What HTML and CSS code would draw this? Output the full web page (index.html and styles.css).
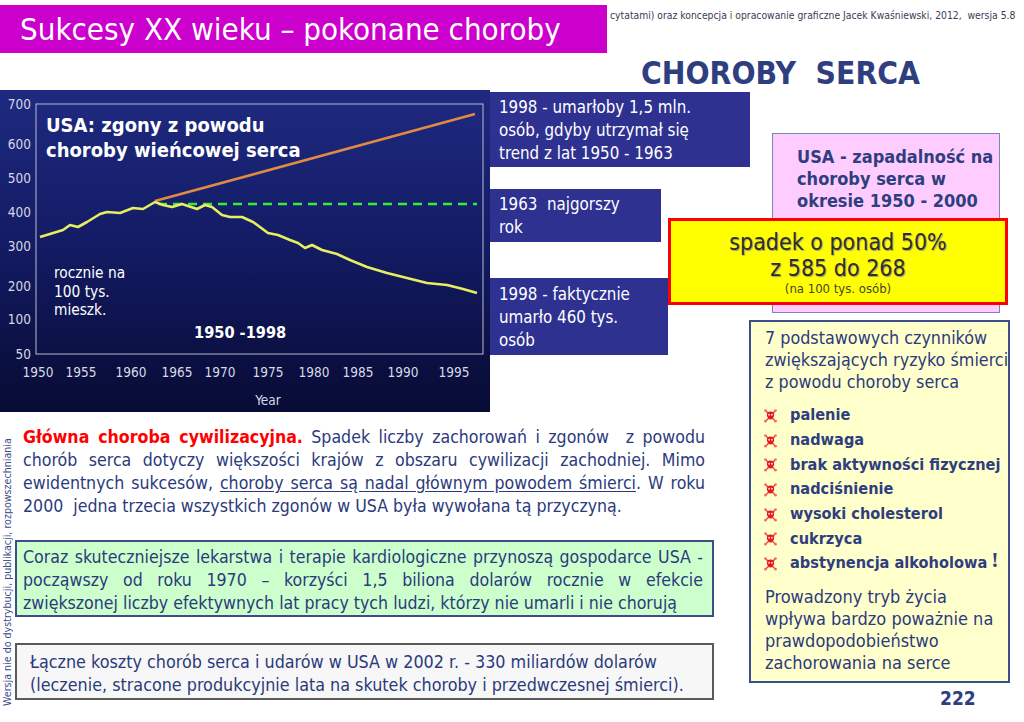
FILE: index.html
```html
<!DOCTYPE html>
<html lang="pl">
<head>
<meta charset="utf-8">
<title>Sukcesy XX wieku – pokonane choroby</title>
<link rel="stylesheet" href="styles.css">
</head>
<body>
<div class="slide">
  <header class="top">
    <div class="title-bar">Sukcesy XX wieku – pokonane choroby</div>
    <div class="credit">cytatami) oraz koncepcja i opracowanie graficzne Jacek Kwaśniewski, 2012,&nbsp; wersja 5.8</div>
  </header>
  <h1 class="heading">CHOROBY&nbsp; SERCA</h1>

  <div class="main">
    <div class="left">
      <div class="top-row">
        <div class="chart">
          <svg viewBox="0 0 490 322" width="490" height="322">
            <defs>
              <linearGradient id="bg" x1="0" y1="0" x2="0" y2="1">
                <stop offset="0" stop-color="#1f2a80"/>
                <stop offset="0.45" stop-color="#141c66"/>
                <stop offset="1" stop-color="#070b34"/>
              </linearGradient>
            </defs>
            <rect x="0" y="0" width="490" height="322" fill="url(#bg)"/>
            <rect x="36" y="14" width="447" height="250" fill="none" stroke="#b9bccf" stroke-width="1"/>
            <g class="ax" text-anchor="end">
              <text x="31" y="19">700</text>
              <text x="31" y="59">600</text>
              <text x="31" y="93">500</text>
              <text x="31" y="127">400</text>
              <text x="31" y="161">300</text>
              <text x="31" y="201">200</text>
              <text x="31" y="234">100</text>
              <text x="31" y="269">50</text>
            </g>
            <g class="ax" text-anchor="middle">
              <text x="38" y="287">1950</text>
              <text x="81" y="287">1955</text>
              <text x="131" y="287">1960</text>
              <text x="177" y="287">1965</text>
              <text x="220" y="287">1970</text>
              <text x="268" y="287">1975</text>
              <text x="314" y="287">1980</text>
              <text x="358" y="287">1985</text>
              <text x="403" y="287">1990</text>
              <text x="454" y="287">1995</text>
              <text x="268" y="315">Year</text>
            </g>
            <line x1="155" y1="111" x2="475" y2="24" stroke="#e08a44" stroke-width="2.6"/>
            <line x1="158" y1="114" x2="477" y2="114" stroke="#33ee33" stroke-width="2.4" stroke-dasharray="9 6"/>
            <polyline fill="none" stroke="#e6ee62" stroke-width="2.6" stroke-linejoin="round"
              points="40,147 63,140 70,135 78,137 87,132 100,124 107,122 120,123 133,118 143,119 155,112 163,115 172,117 182,114 197,119 205,115 212,117 222,125 230,127 242,127 253,132 268,143 278,145 290,150 298,153 305,158 312,155 322,160 337,164 350,170 367,177 387,183 407,188 427,193 447,195 463,199 477,203"/>
            <text class="ctitle" x="46" y="42">USA: zgony z powodu</text>
            <text class="ctitle" x="46" y="67">choroby wieńcowej serca</text>
            <text class="cnote" x="54" y="188">rocznie na</text>
            <text class="cnote" x="54" y="207">100 tys.</text>
            <text class="cnote" x="54" y="225">mieszk.</text>
            <text class="cyears" x="194" y="248">1950 -1998</text>
          </svg>
        </div>
        <div class="notes">
          <div class="note n1">1998 - umarłoby 1,5 mln.<br>osób, gdyby utrzymał się<br>trend z lat 1950 - 1963</div>
          <div class="note n2">1963&nbsp; najgorszy<br>rok</div>
          <div class="note n3">1998 - faktycznie<br>umarło 460 tys.<br>osób</div>
        </div>
      </div>

      <div class="para">
        <div class="jl"><span class="red">Główna choroba cywilizacyjna.</span> Spadek liczby zachorowań i zgonów&nbsp; z powodu</div>
        <div class="jl">chorób serca dotyczy większości krajów z obszaru cywilizacji zachodniej. Mimo</div>
        <div class="jl">ewidentnych sukcesów, <span class="ul">choroby serca są nadal głównym powodem śmierci</span>. W roku</div>
        <div class="ll">2000&nbsp; jedna trzecia wszystkich zgonów w USA była wywołana tą przyczyną.</div>
      </div>

      <div class="green">
        <div class="jl">Coraz skuteczniejsze lekarstwa i terapie kardiologiczne przynoszą gospodarce USA -</div>
        <div class="jl">począwszy od roku 1970 – korzyści 1,5 biliona dolarów rocznie w efekcie</div>
        <div class="ll">zwiększonej liczby efektywnych lat pracy tych ludzi, którzy nie umarli i nie chorują</div>
      </div>

      <div class="grey">
        Łączne koszty chorób serca i udarów w USA w 2002 r. - 330 miliardów dolarów<br>(leczenie, stracone produkcyjnie lata na skutek choroby i przedwczesnej śmierci).
      </div>
    </div>

    <div class="right">
      <div class="pink">
        USA - zapadalność na<br>choroby serca w<br>okresie 1950 - 2000
        <div class="drop">
          <div class="big">spadek o ponad 50%</div>
          <div class="big">z 585 do 268</div>
          <div class="small">(na 100 tys. osób)</div>
        </div>
      </div>

      <div class="factors">
        <div class="intro">7 podstawowych czynników<br>zwiększających ryzyko śmierci<br>z powodu choroby serca</div>
        <ul class="risk">
          <li><svg class="skull" viewBox="0 0 16 16"><g stroke="#f04040" stroke-width="1.5" stroke-linecap="round"><line x1="3" y1="3" x2="13" y2="14"/><line x1="13" y1="3" x2="3" y2="14"/></g><g fill="#f46a6a"><circle cx="2.6" cy="2.6" r="1.4"/><circle cx="13.4" cy="2.6" r="1.4"/><circle cx="2.6" cy="14" r="1.4"/><circle cx="13.4" cy="14" r="1.4"/></g><ellipse cx="8" cy="7.4" rx="3.9" ry="3.6" fill="#e81818"/><rect x="6" y="9.5" width="4" height="2.6" fill="#e81818"/><circle cx="6.5" cy="7.2" r="1" fill="#ffd6d6"/><circle cx="9.5" cy="7.2" r="1" fill="#ffd6d6"/></svg>palenie</li>
          <li><svg class="skull" viewBox="0 0 16 16"><g stroke="#f04040" stroke-width="1.5" stroke-linecap="round"><line x1="3" y1="3" x2="13" y2="14"/><line x1="13" y1="3" x2="3" y2="14"/></g><g fill="#f46a6a"><circle cx="2.6" cy="2.6" r="1.4"/><circle cx="13.4" cy="2.6" r="1.4"/><circle cx="2.6" cy="14" r="1.4"/><circle cx="13.4" cy="14" r="1.4"/></g><ellipse cx="8" cy="7.4" rx="3.9" ry="3.6" fill="#e81818"/><rect x="6" y="9.5" width="4" height="2.6" fill="#e81818"/><circle cx="6.5" cy="7.2" r="1" fill="#ffd6d6"/><circle cx="9.5" cy="7.2" r="1" fill="#ffd6d6"/></svg>nadwaga</li>
          <li><svg class="skull" viewBox="0 0 16 16"><g stroke="#f04040" stroke-width="1.5" stroke-linecap="round"><line x1="3" y1="3" x2="13" y2="14"/><line x1="13" y1="3" x2="3" y2="14"/></g><g fill="#f46a6a"><circle cx="2.6" cy="2.6" r="1.4"/><circle cx="13.4" cy="2.6" r="1.4"/><circle cx="2.6" cy="14" r="1.4"/><circle cx="13.4" cy="14" r="1.4"/></g><ellipse cx="8" cy="7.4" rx="3.9" ry="3.6" fill="#e81818"/><rect x="6" y="9.5" width="4" height="2.6" fill="#e81818"/><circle cx="6.5" cy="7.2" r="1" fill="#ffd6d6"/><circle cx="9.5" cy="7.2" r="1" fill="#ffd6d6"/></svg>brak aktywności fizycznej</li>
          <li><svg class="skull" viewBox="0 0 16 16"><g stroke="#f04040" stroke-width="1.5" stroke-linecap="round"><line x1="3" y1="3" x2="13" y2="14"/><line x1="13" y1="3" x2="3" y2="14"/></g><g fill="#f46a6a"><circle cx="2.6" cy="2.6" r="1.4"/><circle cx="13.4" cy="2.6" r="1.4"/><circle cx="2.6" cy="14" r="1.4"/><circle cx="13.4" cy="14" r="1.4"/></g><ellipse cx="8" cy="7.4" rx="3.9" ry="3.6" fill="#e81818"/><rect x="6" y="9.5" width="4" height="2.6" fill="#e81818"/><circle cx="6.5" cy="7.2" r="1" fill="#ffd6d6"/><circle cx="9.5" cy="7.2" r="1" fill="#ffd6d6"/></svg>nadciśnienie</li>
          <li><svg class="skull" viewBox="0 0 16 16"><g stroke="#f04040" stroke-width="1.5" stroke-linecap="round"><line x1="3" y1="3" x2="13" y2="14"/><line x1="13" y1="3" x2="3" y2="14"/></g><g fill="#f46a6a"><circle cx="2.6" cy="2.6" r="1.4"/><circle cx="13.4" cy="2.6" r="1.4"/><circle cx="2.6" cy="14" r="1.4"/><circle cx="13.4" cy="14" r="1.4"/></g><ellipse cx="8" cy="7.4" rx="3.9" ry="3.6" fill="#e81818"/><rect x="6" y="9.5" width="4" height="2.6" fill="#e81818"/><circle cx="6.5" cy="7.2" r="1" fill="#ffd6d6"/><circle cx="9.5" cy="7.2" r="1" fill="#ffd6d6"/></svg>wysoki cholesterol</li>
          <li><svg class="skull" viewBox="0 0 16 16"><g stroke="#f04040" stroke-width="1.5" stroke-linecap="round"><line x1="3" y1="3" x2="13" y2="14"/><line x1="13" y1="3" x2="3" y2="14"/></g><g fill="#f46a6a"><circle cx="2.6" cy="2.6" r="1.4"/><circle cx="13.4" cy="2.6" r="1.4"/><circle cx="2.6" cy="14" r="1.4"/><circle cx="13.4" cy="14" r="1.4"/></g><ellipse cx="8" cy="7.4" rx="3.9" ry="3.6" fill="#e81818"/><rect x="6" y="9.5" width="4" height="2.6" fill="#e81818"/><circle cx="6.5" cy="7.2" r="1" fill="#ffd6d6"/><circle cx="9.5" cy="7.2" r="1" fill="#ffd6d6"/></svg>cukrzyca</li>
          <li><svg class="skull" viewBox="0 0 16 16"><g stroke="#f04040" stroke-width="1.5" stroke-linecap="round"><line x1="3" y1="3" x2="13" y2="14"/><line x1="13" y1="3" x2="3" y2="14"/></g><g fill="#f46a6a"><circle cx="2.6" cy="2.6" r="1.4"/><circle cx="13.4" cy="2.6" r="1.4"/><circle cx="2.6" cy="14" r="1.4"/><circle cx="13.4" cy="14" r="1.4"/></g><ellipse cx="8" cy="7.4" rx="3.9" ry="3.6" fill="#e81818"/><rect x="6" y="9.5" width="4" height="2.6" fill="#e81818"/><circle cx="6.5" cy="7.2" r="1" fill="#ffd6d6"/><circle cx="9.5" cy="7.2" r="1" fill="#ffd6d6"/></svg>abstynencja alkoholowa<span class="bang">!</span></li>
        </ul>
        <div class="outro">Prowadzony tryb życia<br>wpływa bardzo poważnie na<br>prawdopodobieństwo<br>zachorowania na serce</div>
      </div>
      <div class="pagenum">222</div>
    </div>
  </div>

  <div class="watermark">Wersja nie do dystrybucji, publikacji, rozpowszechniania</div>
</div>
</body>
</html>
```

FILE: styles.css
```css
* { box-sizing: border-box; }
html, body { margin: 0; padding: 0; background: #ffffff; }
body {
  font-family: "DejaVu Sans Condensed", "DejaVu Sans", sans-serif;
  font-stretch: condensed;
  color: #2b3a7c;
}
.slide {
  position: relative;
  width: 1024px;
  height: 722px;
  overflow: hidden;
}

/* header */
.top {
  display: flex;
  align-items: flex-start;
  padding-top: 5px;
}
.title-bar {
  width: 607px;
  height: 48px;
  background: #cc00cc;
  color: #ffffff;
  font-size: 31px;
  line-height: 48px;
  padding-left: 20px;
  white-space: nowrap;
}
.credit {
  font-size: 10.3px;
  color: #3b3b55;
  margin-left: 3px;
  margin-top: 4px;
  white-space: nowrap;
}
.heading {
  margin: 0;
  height: 37px;
  padding-left: 641px;
  font-size: 31.5px;
  line-height: 40px;
  font-weight: bold;
  color: #2e3e7e;
  white-space: nowrap;
}

/* main */
.main {
  display: flex;
  align-items: flex-start;
}
.left {
  width: 749px;
  flex: none;
}
.top-row {
  display: flex;
  height: 322px;
}
.chart { width: 490px; height: 322px; flex: none; }
.chart svg { display: block; }
.ax { font-family: "DejaVu Sans Condensed", "DejaVu Sans", sans-serif; font-size: 13.5px; fill: #d7d9e6; }
.ctitle { font-family: "DejaVu Sans Condensed", "DejaVu Sans", sans-serif; font-size: 20px; font-weight: bold; fill: #ffffff; }
.cnote { font-family: "DejaVu Sans Condensed", "DejaVu Sans", sans-serif; font-size: 15.3px; fill: #ffffff; }
.cyears { font-family: "DejaVu Sans Condensed", "DejaVu Sans", sans-serif; font-size: 16.2px; font-weight: bold; fill: #ffffff; }

.notes {
  display: flex;
  flex-direction: column;
  align-items: flex-start;
  padding-top: 2px;
}
.note {
  background: #2e3190;
  color: #ffffff;
  font-size: 16.8px;
  line-height: 23px;
  padding-left: 9px;
  white-space: nowrap;
}
.n1 { width: 260px; height: 75px; padding-top: 4px; }
.n2 { width: 171px; height: 53px; margin-top: 22px; padding-top: 4px; }
.n3 { width: 178px; height: 77px; margin-top: 36px; padding-top: 5px; }

/* text blocks */
.para {
  margin: 14px 0 0 23px;
  width: 682px;
  font-size: 17.6px;
  line-height: 23px;
}
.jl { text-align: justify; text-align-last: justify; white-space: nowrap; }
.ll { text-align: left; white-space: nowrap; }
.red { color: #ff0000; font-weight: bold; }
.ul { text-decoration: underline; text-underline-offset: 2px; }

.green {
  margin: 22px 0 0 15px;
  width: 699px;
  height: 77px;
  background: #ccffcc;
  border: 2px solid #3d4d8c;
  padding: 4px 9px 0 6px;
  font-size: 17.6px;
  line-height: 23px;
}
.grey {
  margin: 26px 0 0 15px;
  width: 699px;
  height: 57px;
  background: #f7f7f7;
  border: 2px solid #5a5a5a;
  padding: 5px 0 0 13px;
  font-size: 17.8px;
  line-height: 23px;
  white-space: nowrap;
}

/* right column */
.right {
  width: 275px;
  flex: none;
}
.pink {
  position: relative;
  margin: 43px 0 0 23px;
  width: 228px;
  height: 180px;
  background: #ffccff;
  border: 1px solid #7a86b8;
  padding: 12px 0 0 24px;
  font-size: 18px;
  line-height: 22px;
  font-weight: bold;
  color: #2e3e7e;
  white-space: nowrap;
}
.drop {
  position: absolute;
  left: -105px;
  top: 84px;
  width: 340px;
  height: 87px;
  background: #ffff00;
  border: 3px solid #ff0000;
  text-align: center;
  color: #2f2f20;
  font-weight: normal;
  padding-top: 8px;
}
.drop .big {
  font-size: 23px;
  line-height: 26px;
  text-shadow: 1px 1px 1px #a0a070;
}
.drop .small {
  font-size: 13px;
  line-height: 15px;
  color: #444430;
}

.factors {
  margin-top: 7px;
  width: 261px;
  height: 363px;
  background: #ffffcc;
  border: 2px solid #3d4d8c;
  padding: 5px 0 0 14px;
  font-size: 17.8px;
  line-height: 22px;
  white-space: nowrap;
}
.risk {
  list-style: none;
  margin: 10px 0 0 0;
  padding: 0;
}
.risk li {
  display: flex;
  align-items: center;
  height: 24.7px;
  font-size: 16.2px;
  font-weight: bold;
  color: #2e3e7e;
}
.skull {
  width: 15px;
  height: 15px;
  margin: 0 12px 0 -2px;
  flex: none;
}
.bang {
  font-family: "Liberation Serif", serif;
  font-size: 22px;
  margin-left: 4px;
  position: relative;
  top: -3px;
}
.outro {
  margin-top: 10px;
  font-size: 18px;
}
.pagenum {
  padding-left: 191px;
  height: 30px;
  line-height: 30px;
  font-size: 19px;
  font-weight: bold;
  color: #2e3e7e;
}

/* vertical watermark */
.watermark {
  position: absolute;
  left: 2px;
  top: 438px;
  height: 268px;
  writing-mode: vertical-rl;
  transform: rotate(180deg);
  font-size: 10.6px;
  color: #3a4a8a;
  white-space: nowrap;
  line-height: 11px;
}
```
